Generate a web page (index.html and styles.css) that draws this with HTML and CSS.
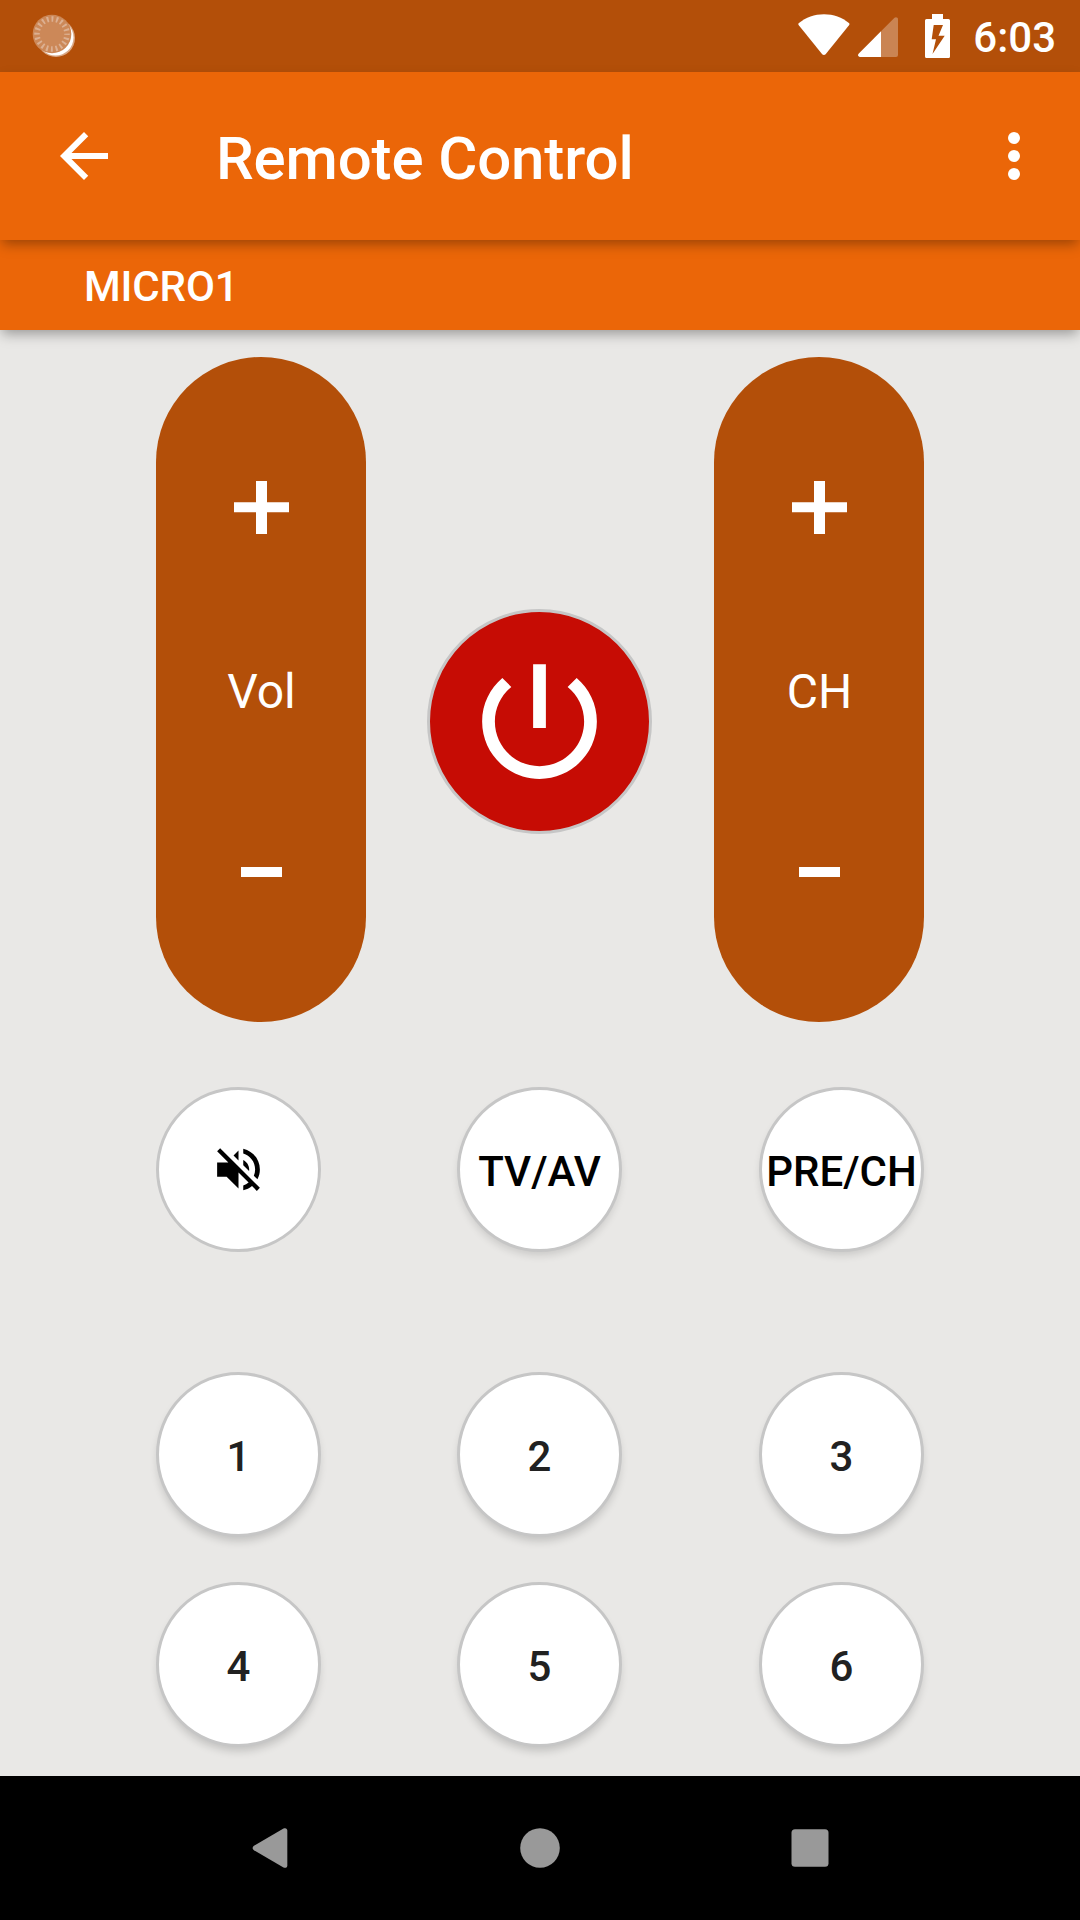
FILE: index.html
```
<!DOCTYPE html>
<html lang="en">
<head>
    <meta charset="UTF-8">
    <meta name="viewport" content="width=device-width, initial-scale=1.0">
    <title>Remote Control</title>
    <link rel="stylesheet" href="styles.css">
</head>
<body>
    <div class="status-bar">
        <svg class="sync-icon" viewBox="0 0 44 44">
            <circle cx="24" cy="25" r="19" fill="#fff" fill-opacity="0.5"/>
            <circle cx="23.500" cy="24.500" r="18" fill="#fff"/>
            <circle cx="20" cy="21" r="19.300" fill="#cc8858"/>
            <circle class="ticks" cx="20" cy="21" r="15"/>
        </svg>
        <div class="status-icons">
            <svg class="wifi-icon" width="52" height="42" viewBox="0 0 52 42">
                <path d="M.6 8.600C8 3 16.500.2 26 .2S44 3 51.200 8.600C51.600 9 51.500 9.900 51 10.500L27.600 37.200C26.600 38.200 25.200 38.200 24.200 37.200L.8 10.500C.2 9.800.2 9 .6 8.600z" fill="#fff" transform="scale(1 1.080)"/>
            </svg>
            <svg class="signal-icon" width="40" height="40" viewBox="0 0 40 40">
                <path d="M23 14.200L36.500.8C37.800-.3 40 .4 40 2.200V38a2 2 0 0 1-2 2H23z" fill="#fff" fill-opacity="0.3"/>
                <path d="M23 14.200V40H2C.2 40-.6 38 .6 36.700z" fill="#fff"/>
            </svg>
            <svg class="battery-icon" width="25" height="44" viewBox="0 0 25 44">
                <path fill-rule="evenodd" d="M7 0h11v5h5.500A1.500 1.500 0 0 1 25 6.500v36a1.500 1.500 0 0 1-1.500 1.500h-22A1.500 1.500 0 0 1 0 42.500v-36A1.500 1.500 0 0 1 1.500 5H7zM8.700 11L6.700 25.300H11L7.500 40 19.700 21.800h-6.200L18 11z" fill="#fff"/>
            </svg>
            <span class="clock">6:03</span>
        </div>
    </div>

    <div class="app-bar">
        <svg class="back-icon" viewBox="0 0 24 24">
            <path d="M20 11H7.830l5.590-5.590L12 4l-8 8 8 8 1.410-1.410L7.830 13H20v-2z" fill="#fff"/>
        </svg>
        <h1>Remote Control</h1>
        <svg class="more-icon" viewBox="0 0 24 24" fill="#fff">
            <circle cx="12" cy="6" r="2"/>
            <circle cx="12" cy="12" r="2"/>
            <circle cx="12" cy="18" r="2"/>
        </svg>
    </div>

    <div class="device-bar">MICRO1</div>

    <div class="remote">
        <div class="controls">
            <div class="rocker">
                <svg class="plus" viewBox="0 0 55 53">
                    <path d="M22 0h11v21.300h22v10H33V53H22V31.300H0v-10h22z" fill="#fff"/>
                </svg>
                <span>Vol</span>
                <svg class="minus" viewBox="0 0 41 10"><path d="M0 0h41v10H0z" fill="#fff"/></svg>
            </div>

            <button class="power">
                <svg viewBox="0 0 24 24">
                    <path d="M13 3h-2v10h2V3zm4.830 2.170l-1.420 1.420C17.990 7.860 19 9.810 19 12c0 3.870-3.130 7-7 7s-7-3.130-7-7c0-2.190 1.010-4.140 2.580-5.420L6.170 5.170C4.230 6.820 3 9.260 3 12c0 4.970 4.030 9 9 9s9-4.030 9-9c0-2.740-1.230-5.180-3.170-6.830z" fill="#fff"/>
                </svg>
            </button>

            <div class="rocker">
                <svg class="plus" viewBox="0 0 55 53">
                    <path d="M22 0h11v21.300h22v10H33V53H22V31.300H0v-10h22z" fill="#fff"/>
                </svg>
                <span>CH</span>
                <svg class="minus" viewBox="0 0 41 10"><path d="M0 0h41v10H0z" fill="#fff"/></svg>
            </div>
        </div>

        <div class="key-row options">
            <button class="key mute">
                <svg viewBox="0 0 24 24">
                    <path d="M16.500 12c0-1.770-1.020-3.290-2.500-4.030v2.210l2.450 2.450c.03-.2.05-.41.05-.63zm2.500 0c0 .94-.2 1.820-.54 2.640l1.510 1.510C20.630 14.910 21 13.500 21 12c0-4.280-2.990-7.860-7-8.770v2.060c2.890.86 5 3.540 5 6.710zM4.270 3L3 4.270 7.730 9H3v6h4l5 5v-6.730l4.250 4.250c-.67.52-1.420.93-2.250 1.180v2.060c1.380-.31 2.630-.95 3.690-1.810L19.730 21 21 19.730l-9-9L4.270 3zM12 4L9.910 6.090 12 8.180V4z"/>
                </svg>
            </button>
            <button class="key">TV/AV</button>
            <button class="key">PRE/CH</button>
        </div>

        <div class="key-row digits">
            <button class="key">1</button>
            <button class="key">2</button>
            <button class="key">3</button>
        </div>
        <div class="key-row digits">
            <button class="key">4</button>
            <button class="key">5</button>
            <button class="key">6</button>
        </div>
    </div>

    <div class="nav-bar">
        <svg viewBox="0 0 54 54">
            <path d="M11 24.700L40.500 7.600C42.500 6.500 44.300 7.500 44.300 9.500v35C44.300 46.500 42.500 47.500 40.500 46.400L11 29.300C9.200 28.200 9.200 25.800 11 24.700z"/>
        </svg>
        <svg viewBox="0 0 54 54"><circle cx="27" cy="27" r="19.800"/></svg>
        <svg viewBox="0 0 54 54"><rect x="8.500" y="8.200" width="37" height="37.600" rx="3.500"/></svg>
    </div>
</body>
</html>
```
FILE: styles.css
```
* {
    box-sizing: border-box;
}

body {
    margin: 0;
    width: 1080px;
    height: 1920px;
    overflow: hidden;
    display: flex;
    flex-direction: column;
    font-family: "Roboto", sans-serif;
    font-weight: 500;
    background-color: #e9e8e6;
    color: #fff;
}

svg {
    display: block;
    flex-shrink: 0;
}

.status-bar {
    display: flex;
    justify-content: space-between;
    height: 72px;
    padding: 0 24px 0 32px;
    background-color: #b34f09;
}

.sync-icon {
    width: 44px;
    height: 44px;
    margin-top: 13px;
}

.ticks {
    fill: none;
    stroke: #dcb092;
    stroke-width: 5.500;
    stroke-dasharray: 1.900 2.812;
    stroke-dashoffset: 0.950;
}

.status-icons {
    display: flex;
    align-items: flex-start;
}

.wifi-icon {
    margin-top: 14px;
}

.signal-icon {
    margin: 17px 0 0 8px;
}

.battery-icon {
    margin: 14px 0 0 27px;
}

.clock {
    margin-left: 23px;
    font-size: 42px;
    line-height: 76px;
}

.app-bar {
    position: relative;
    z-index: 2;
    display: flex;
    align-items: center;
    height: 168px;
    padding: 0 30px 0 48px;
    background-color: #eb6608;
    box-shadow: 0 6px 12px -2px rgba(0, 0, 0, 0.34);
}

.back-icon,
.more-icon {
    width: 72px;
    height: 72px;
}

.app-bar h1 {
    flex: 1;
    margin: 0 0 0 96px;
    padding-top: 5px;
    font-size: 60px;
    font-weight: 500;
    line-height: 70px;
    letter-spacing: -0.15px;
}

.device-bar {
    position: relative;
    z-index: 1;
    height: 90px;
    padding: 4px 84px 0;
    font-size: 42px;
    line-height: 86px;
    letter-spacing: -0.15px;
    background-color: #eb6608;
    box-shadow: 0 6px 12px -2px rgba(0, 0, 0, 0.34);
}

.remote {
    flex: 1;
    padding: 27px 156px 0;
}

.controls {
    display: flex;
    justify-content: space-between;
}

.rocker {
    display: flex;
    flex-direction: column;
    align-items: center;
    width: 210px;
    height: 665px;
    padding-top: 124px;
    border-radius: 105px;
    font-size: 48px;
    font-weight: 400;
    background-color: #b34f09;
}

.rocker span {
    margin: 129px 0 147px 1px;
    line-height: 57px;
}

.plus {
    width: 55px;
    height: 53px;
    margin-left: 1px;
}

.minus {
    width: 41px;
    height: 10px;
}

button {
    display: flex;
    justify-content: center;
    align-items: center;
    padding: 0;
    border: 3px solid #c6c6c6;
    border-radius: 50%;
    font: inherit;
    cursor: pointer;
}

.power {
    width: 225px;
    height: 225px;
    margin: 252px 1px 0 0;
    background-color: #c60c04;
}

.power svg {
    width: 153px;
    height: 153px;
}

.key-row {
    display: flex;
    justify-content: space-between;
    margin-top: 45px;
}

.key-row.options {
    margin: 65px 0 120px;
}

.key {
    width: 165px;
    height: 165px;
    padding-top: 4px;
    font-size: 42px;
    white-space: nowrap;
    color: #000;
    background-color: #fff;
    box-shadow: 0 5px 8px -2px rgba(0, 0, 0, 0.14);
}

.key:nth-child(2) {
    margin-right: 1px;
}

.digits .key {
    color: #212121;
    box-shadow: 0 6px 8px -2px rgba(0, 0, 0, 0.17);
}

.key.mute {
    padding-top: 0;
    box-shadow: none;
}

.mute svg {
    width: 57px;
    height: 57px;
}

.nav-bar {
    display: flex;
    justify-content: center;
    align-items: center;
    gap: 216px;
    height: 144px;
    background-color: #000;
}

.nav-bar svg {
    width: 54px;
    height: 54px;
    fill: #999;
}
```
